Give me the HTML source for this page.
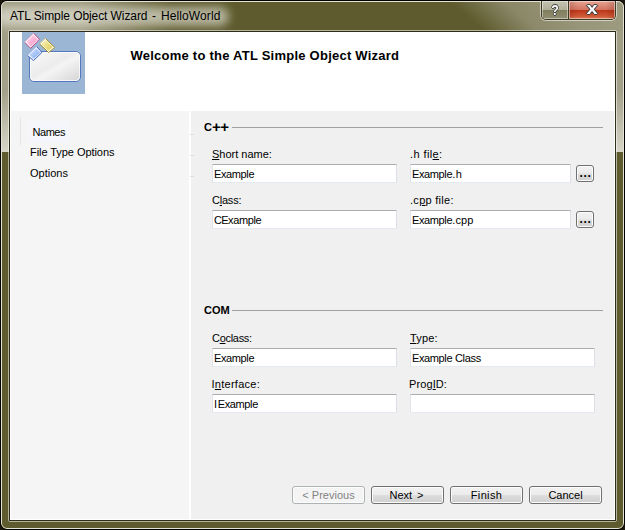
<!DOCTYPE html>
<html lang="en">
<head>
<meta charset="utf-8">
<title>ATL Simple Object Wizard - HelloWorld</title>
<style>
*{box-sizing:border-box;margin:0;padding:0}
html,body{width:625px;height:530px;overflow:hidden;background:#1c170e}
body{font-family:"Liberation Sans",sans-serif;font-size:11px;color:#000;position:relative}
.abs{position:absolute}
#frame{position:absolute;left:0;top:0;width:625px;height:530px;background:#5e5b2e;border:1px solid #000;border-radius:7px 7px 7px 7px;overflow:hidden}
#frame .hl{position:absolute;left:0;top:0;right:0;bottom:0;border:1px solid #e4e3d6;border-radius:6px 6px 6px 6px}
/* light (reflection) upper band */
#upper{position:absolute;left:0;top:0;width:623px;height:151px;background:linear-gradient(to bottom,#9c9a7e 0,#a09e84 30px,#a3a189 90px,#d6d5c6 150px)}
#titledark{position:absolute;left:80px;top:0;width:221px;height:30px;background:linear-gradient(to right,rgba(94,91,46,0) 0,#5e5b2e 90px,#5e5b2e 100%)}
#titledark2{position:absolute;left:300px;top:0;width:323px;height:30px;background:linear-gradient(40deg,#5e5b2e 0,#5e5b2e 118px,rgba(94,91,46,.3) 153px,rgba(94,91,46,.1) 185px,rgba(94,91,46,0) 230px)}
#glow{position:absolute;left:-6px;top:6px;width:234px;height:19px;border-radius:10px;background:#ebeae0;filter:blur(5px);opacity:.64}
#title{position:absolute;left:9px;top:7px;font-size:12px;line-height:16px;white-space:nowrap;color:#000;letter-spacing:.055px}
/* caption buttons */
#capbtns{position:absolute;left:540px;top:0;width:75px;height:19px;border:1px solid #3c3b24;border-top:none;border-radius:0 0 5px 5px;overflow:hidden;box-shadow:0 0 0 1px rgba(255,255,255,.55)}
#help{position:absolute;left:0;top:0;width:27px;height:18px;background:linear-gradient(to bottom,#c4c3b1 0,#b0af98 48%,#7f7d5c 52%,#918f72 100%);border-right:1px solid #3c3b24;box-shadow:inset 0 0 0 1px rgba(255,255,255,.45)}
#close{position:absolute;left:27px;top:0;width:46px;height:18px;background:linear-gradient(to right,rgba(90,10,0,.18) 0,rgba(90,10,0,0) 9px,rgba(90,10,0,0) 37px,rgba(90,10,0,.22) 100%),linear-gradient(to bottom,#e5a594 0,#d3745f 48%,#bd3619 52%,#cf5a38 85%,#dc8059 100%);box-shadow:inset 0 0 0 1px rgba(255,255,255,.45)}
.capglyph{position:absolute;font-weight:bold;color:#fff;text-shadow:0 0 1px #333,1px 0 0 #444,-1px 0 0 #444,0 1px 0 #444,0 -1px 0 #444}
/* client */
#cborder{position:absolute;left:8px;top:30px;width:609px;height:492px;border:1px solid rgba(255,255,255,.55);border-radius:2px}
#cborder2{position:absolute;left:9px;top:31px;width:607px;height:490px;border:1px solid #2e2d18}
#client{position:absolute;left:10px;top:32px;width:605px;height:488px;background:#f0f0f0;overflow:hidden}
#header{position:absolute;left:0;top:0;width:605px;height:79px;background:#fff}
#iconbox{position:absolute;left:12px;top:0;width:63px;height:62px;background:#9bb5d5}
#heading{position:absolute;left:120.5px;top:16px;font-size:13px;font-weight:bold;line-height:16px;white-space:nowrap;letter-spacing:.24px}
#side{position:absolute;left:0;top:79px;width:179px;height:409px;background:#f5f5f5}
#sep{position:absolute;left:179px;top:79px;width:2px;height:409px;background:#fff}
#sideline{position:absolute;left:10px;top:85px;width:1px;height:28px;background:#e5e5e5}
#sel{position:absolute;left:19px;top:89px;width:40px;height:21px;background:#f4f6fb}
.nav{position:absolute;left:20px;line-height:13px;white-space:nowrap}
.tick{position:absolute;left:180px;width:4px;height:1px;background:#dedede}
.sec{position:absolute;left:194px;font-weight:bold;line-height:13px}
.rule{position:absolute;height:1px;background:#a0a0a0}
.lbl{position:absolute;line-height:13px;white-space:nowrap}
.lbl u{text-decoration:underline}
.edit{position:absolute;height:19px;background:#fff;border:1px solid #e3e9ef;border-top-color:#abadb3;border-left-color:#e2e3ea;border-right-color:#dbdfe6;border-radius:1px;padding-left:1px;line-height:17px;white-space:nowrap;padding-top:1px}
.ex{letter-spacing:-.38px}
.btn{position:absolute;height:18px;width:73px;border:1px solid #707070;border-radius:3px;background:linear-gradient(to bottom,#f2f2f2 0,#ebebeb 48%,#dddddd 52%,#cfcfcf 100%);box-shadow:inset 0 0 0 1px #fcfcfc;text-align:center;line-height:16px;white-space:nowrap}
.btn.dis{border-color:#adb2b5;background:#f4f4f4;color:#838383}
.dots{position:absolute;width:18px;height:17px;border:1px solid #707070;border-radius:3px;background:linear-gradient(to bottom,#f2f2f2 0,#ebebeb 48%,#dddddd 52%,#cfcfcf 100%);box-shadow:inset 0 0 0 1px #fcfcfc;text-align:center;line-height:15px;font-size:12px;font-weight:bold;letter-spacing:.7px;padding-left:1px}
</style>
</head>
<body>
<div id="frame">
  <div id="upper"></div>
  <div id="titledark"></div>
  <div id="titledark2"></div>
  <div id="glow"></div>
  <div class="hl"></div>
  <div id="title"><span style="letter-spacing:-.08px">ATL Simple Object Wizard</span><span style="word-spacing:1.2px;letter-spacing:.12px"> - HelloWorld</span></div>
  <div id="capbtns">
    <div id="help"><span class="capglyph" style="left:6px;top:1px;font-size:15px;line-height:16px;transform:scaleX(.82);display:block;width:14px;text-align:center">?</span></div>
    <div id="close"><span class="capglyph" style="left:15px;top:-2px;font-size:16px;line-height:20px;transform:scaleX(1.25);display:block;width:16px;text-align:center">x</span></div>
  </div>
</div>
<div id="cborder"></div>
<div id="cborder2"></div>
<div id="client">
  <div id="header">
    <div id="iconbox">
      <svg width="63" height="62" viewBox="0 0 63 62">
        <defs>
          <linearGradient id="gc" x1="0" y1="0" x2="1" y2="1"><stop offset="0" stop-color="#fbfbfb"/><stop offset=".45" stop-color="#ececec"/><stop offset=".55" stop-color="#f4f4f4"/><stop offset="1" stop-color="#d4d4d4"/></linearGradient>
          <linearGradient id="gp" x1="0" y1="0" x2="1" y2="1"><stop offset="0" stop-color="#ffe6f3"/><stop offset=".5" stop-color="#fbb4d8"/><stop offset="1" stop-color="#f995c8"/></linearGradient>
          <linearGradient id="gy" x1="0" y1="0" x2="1" y2="1"><stop offset="0" stop-color="#f8f2bc"/><stop offset=".5" stop-color="#ebdf84"/><stop offset="1" stop-color="#d9c95c"/></linearGradient>
          <linearGradient id="gb" x1="0" y1="0" x2="1" y2="1"><stop offset="0" stop-color="#e0ecff"/><stop offset=".5" stop-color="#a9c6f8"/><stop offset="1" stop-color="#7fa8f0"/></linearGradient>
        </defs>
        <rect x="7.5" y="19.5" width="51" height="30" rx="4.5" ry="4.5" fill="url(#gc)" stroke="#5577bd" stroke-width="1"/>
        <rect x="8.5" y="20.5" width="49" height="28" rx="3.5" ry="3.5" fill="none" stroke="#ffffff" stroke-opacity=".7" stroke-width="1"/>
        <polygon points="11.5,1.2 17.4,7.2 8.7,16.3 2.7,10.3" fill="#fff" stroke="#b8407f" stroke-width="1"/>
        <polygon points="11.2,2.7 15.9,7.5 9.0,14.8 4.2,10.0" fill="url(#gp)" stroke="#fff" stroke-opacity=".6" stroke-width=".5"/>
        <line x1="2.7" y1="10.3" x2="11.5" y2="1.2" stroke="#fff" stroke-opacity=".75" stroke-width="1"/>
        <polygon points="23.4,6.4 32.7,15.4 26.6,20.5 17.6,11.9" fill="#fff" stroke="#a38d22" stroke-width="1"/>
        <polygon points="23.7,7.8 31.2,15.0 26.3,19.1 19.1,12.2" fill="url(#gy)" stroke="#fff" stroke-opacity=".6" stroke-width=".5"/>
        <line x1="17.6" y1="11.9" x2="23.4" y2="6.4" stroke="#fff" stroke-opacity=".75" stroke-width="1"/>
        <polygon points="14.4,14.4 19.9,20.5 11.5,28.5 5.4,23.4" fill="#fff" stroke="#3a62c2" stroke-width="1"/>
        <polygon points="14.1,15.9 18.5,20.7 11.8,27.1 6.9,23.1" fill="url(#gb)" stroke="#fff" stroke-opacity=".6" stroke-width=".5"/>
        <line x1="5.4" y1="23.4" x2="14.4" y2="14.4" stroke="#fff" stroke-opacity=".75" stroke-width="1"/>
      </svg>
    </div>
    <div id="heading">Welcome to the ATL Simple Object Wizard</div>
  </div>
  <div id="side"></div>
  <div id="sep"></div>
  <div id="sideline"></div>
  <div id="sel"></div>
  <div class="nav" style="left:22.5px;top:94px;letter-spacing:-.45px">Names</div>
  <div class="nav" style="top:114px;letter-spacing:-.06px">File Type Options</div>
  <div class="nav" style="top:135px">Options</div>
  <div class="tick" style="top:102px"></div>
  <div class="tick" style="top:123px"></div>
  <div class="tick" style="top:144px"></div>

  <div class="sec" style="top:89px">C<span style="font-size:15px;line-height:15px;position:absolute;left:8px;top:-2.5px;letter-spacing:-.4px">++</span></div>
  <div class="rule" style="left:222px;top:95px;width:371px"></div>
  <div class="lbl" style="left:202px;top:116px"><u>S</u>hort name:</div>
  <div class="edit" style="left:202px;top:132px;width:185px"><span class="ex">Example</span></div>
  <div class="lbl" style="left:400px;top:116px;letter-spacing:.4px">.h fil<u>e</u>:</div>
  <div class="edit" style="left:400px;top:132px;width:161px"><span class="ex">Example</span><span style="letter-spacing:.5px">.h</span></div>
  <div class="dots" style="left:566px;top:133px">...</div>
  <div class="lbl" style="left:202px;top:162px;letter-spacing:-.22px">C<u>l</u>ass:</div>
  <div class="edit" style="left:202px;top:178px;width:185px"><span style="letter-spacing:-.8px">C</span><span class="ex">Example</span></div>
  <div class="lbl" style="left:400px;top:162px;letter-spacing:.28px">.c<u>p</u>p file:</div>
  <div class="edit" style="left:400px;top:178px;width:161px"><span class="ex">Example</span><span style="letter-spacing:.18px">.cpp</span></div>
  <div class="dots" style="left:566px;top:179px">...</div>

  <div class="sec" style="top:272px">COM</div>
  <div class="rule" style="left:222px;top:278px;width:371px"></div>
  <div class="lbl" style="left:202px;top:300px;letter-spacing:-.3px">C<u>o</u>class:</div>
  <div class="edit" style="left:202px;top:316px;width:185px"><span class="ex">Example</span></div>
  <div class="lbl" style="left:400px;top:300px;letter-spacing:.15px"><u>T</u>ype:</div>
  <div class="edit" style="left:400px;top:316px;width:185px"><span class="ex">Example</span><span style="letter-spacing:-.28px"> Class</span></div>
  <div class="lbl" style="left:202px;top:346px;letter-spacing:.27px;margin-left:-.5px">I<u>n</u>terface:</div>
  <div class="edit" style="left:202px;top:362px;width:185px"><span style="letter-spacing:.7px">I</span><span class="ex">Example</span></div>
  <div class="lbl" style="left:399px;top:346px;letter-spacing:.1px">Prog<u>I</u>D:</div>
  <div class="edit" style="left:400px;top:362px;width:185px"></div>

  <div class="btn dis" style="left:282px;top:454px">&lt; Previous</div>
  <div class="btn" style="left:361px;top:454px;word-spacing:2px;padding-right:2px">Next &gt;</div>
  <div class="btn" style="left:440px;top:454px;letter-spacing:.35px">Finish</div>
  <div class="btn" style="left:519px;top:454px">Cancel</div>
  <div class="abs" style="left:0;top:0;width:605px;height:488px;border:1px solid #fff;border-top:none;pointer-events:none"></div>
</div>
</body>
</html>
